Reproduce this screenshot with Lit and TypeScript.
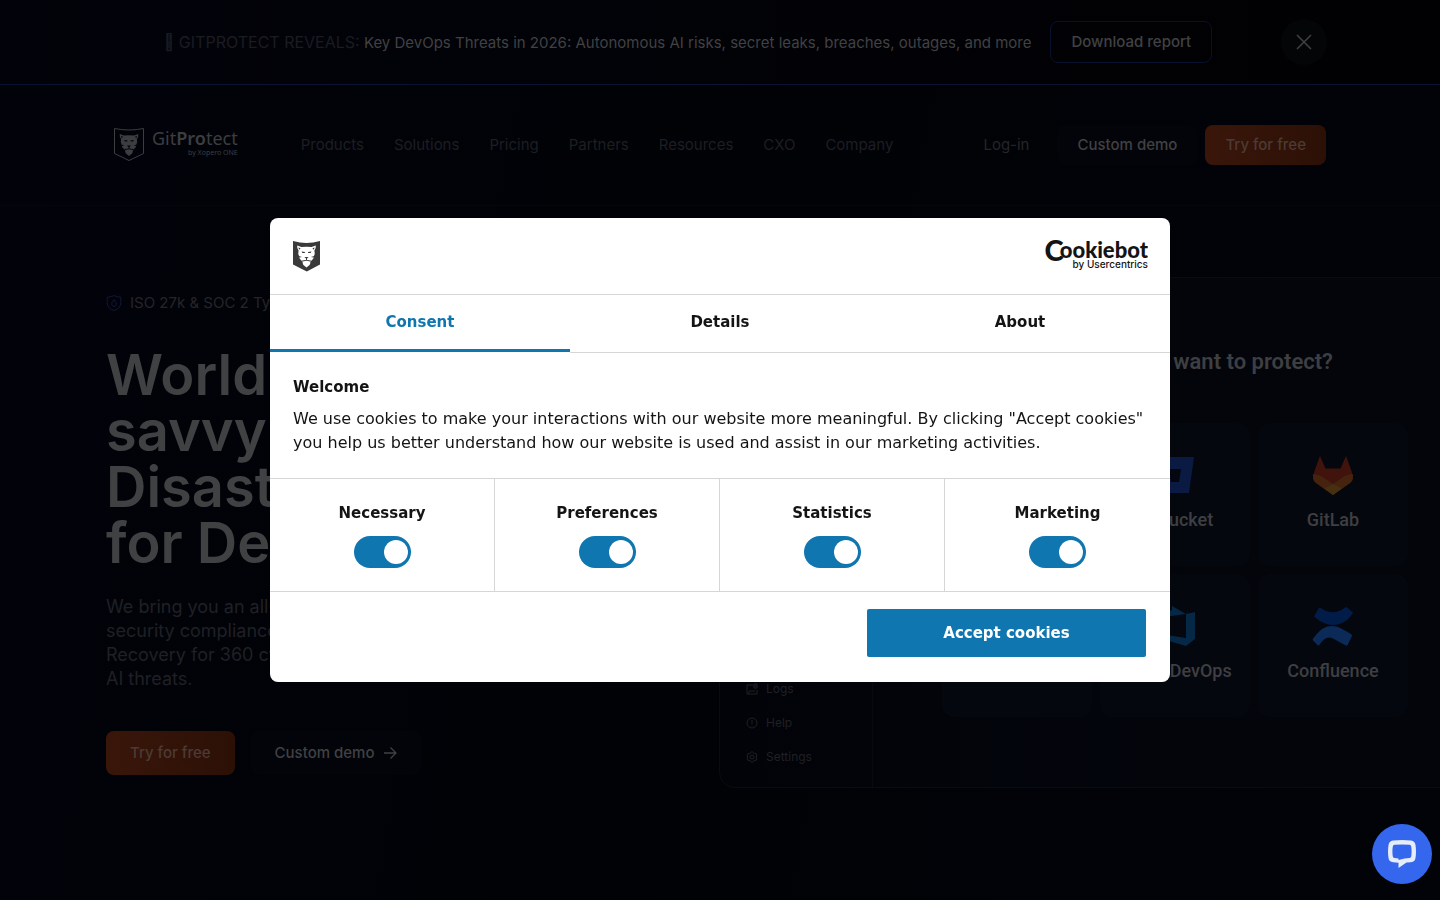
import { LitElement, html, css, svg } from "lit";
import { customElement, state } from "lit/decorators.js";
import { classMap } from "lit/directives/class-map.js";

const pantherFace = svg`
  <path d="M4.200 4.400 8.400 6Q10.500 5.800 13.500 5.800T18.600 6L22.800 4.400Q23.200 7.500 21.400 9.400Q22.300 12.500 20.800 15.200L20.400 17.600 18.600 19.400 17.400 20.600Q17.600 22.600 16.600 24L13.500 26.400 10.400 24Q9.400 22.600 9.600 20.600L8.400 19.400 6.600 17.600 6.200 15.200Q4.700 12.500 5.600 9.400Q3.800 7.500 4.200 4.400Z" />
`;
const pantherMarks = svg`
  <path d="M5.400 6.600 7.600 7.200 6.200 8.800ZM21.600 6.600 19.400 7.200 20.800 8.800ZM8.600 10.600 12 11 11.800 12 9.400 11.900ZM18.400 10.600 15 11 15.200 12 17.600 11.900ZM5.600 15 9 16 6.400 16.400ZM21.400 15 18 16 20.600 16.400ZM11.400 16H15.600L14 17.600V19L18 19.600 17.400 20.400 13.500 19.800 9.600 20.400 9 19.600 13 19V17.600Z" />
`;

@customElement("brand-mark")
export class BrandMark extends LitElement {
  static properties = { solid: { type: Boolean } };
  declare solid: boolean;

  static styles = css`
    :host { display: block; }
    svg { display: block; }
    .shield { fill: #3a3a3a; }
    .face { fill: #ffffff; }
    .marks { fill: #3a3a3a; }
    .shield-line { fill: none; stroke: #3c3d40; stroke-width: 1; }
    .face-dim { fill: #3c3d40; }
    .marks-dim { fill: #02030a; }
  `;

  render() {
    return this.solid
      ? html`<svg width="28" height="31" viewBox="0 0 28 31" aria-hidden="true">
          <path class="shield" d="M0 0Q7 2 13.500 2T27 0V23.500L13.800 30.500 0 23.500Z" />
          <g class="face">${pantherFace}</g><g class="marks">${pantherMarks}</g>
        </svg>`
      : html`<svg width="30" height="34" viewBox="-1 -1 30 34" aria-hidden="true">
          <path class="shield-line" d="M-.5-.5Q7 1 14 1T28.500-.5V24.500L14 31.500-.5 24.500Z" />
          <g class="face-dim" transform="translate(.5 .5)">${pantherFace}</g>
          <g class="marks-dim" transform="translate(.5 .5)">${pantherMarks}</g>
        </svg>`;
  }
}

@customElement("cookie-dialog")
export class CookieDialog extends LitElement {
  @state() private tab = "Consent";

  static styles = css`
    :host {
      position: fixed;
      top: 50%;
      left: 50%;
      transform: translate(-50%, -50%);
      width: min(900px, 94vw);
      background: #ffffff;
      color: #141414;
      border-radius: 8px;
      overflow: hidden;
      font-family: "DejaVu Sans", sans-serif;
      font-size: 15px;
      line-height: 24px;
    }
    .head {
      display: flex;
      align-items: center;
      justify-content: space-between;
      height: 76px;
      padding: 0 22px 0 23px;
      border-bottom: 1px solid #d6d6d6;
    }
    .tabs { display: grid; grid-template-columns: repeat(3, 1fr); }
    .tab {
      height: 58px;
      padding: 0 0 4px;
      border: 0;
      border-bottom: 1px solid #d6d6d6;
      background: none;
      color: inherit;
      font: bold 15px "DejaVu Sans", sans-serif;
    }
    .tab.active {
      height: 57px;
      padding-bottom: 1px;
      border-bottom: 3px solid #1076b0;
      color: #1076b0;
    }
    .body { padding: 22px 23px 23px; }
    .title { margin: 0 0 8px; font-size: 15px; font-weight: bold; }
    .text { margin: 0; font-size: 16px; }
    .kinds {
      display: grid;
      grid-template-columns: repeat(4, 1fr);
      border-top: 1px solid #d6d6d6;
      border-bottom: 1px solid #d6d6d6;
    }
    .kind {
      display: flex;
      flex-direction: column;
      align-items: center;
      gap: 11px;
      padding: 22px 0 23px;
      font-weight: bold;
      border-right: 1px solid #d6d6d6;
    }
    .kind:last-child { border-right: 0; }
    .switch {
      appearance: none;
      display: flex;
      justify-content: flex-end;
      align-items: center;
      box-sizing: border-box;
      width: 57px;
      height: 32px;
      margin: 0;
      padding: 0 3px;
      border-radius: 16px;
      background: #1076b0;
    }
    .switch::before {
      content: "";
      width: 24px;
      height: 24px;
      border-radius: 50%;
      background: #ffffff;
    }
    .switch:not(:checked) { justify-content: flex-start; background: #d6d6d6; }
    .foot { display: flex; justify-content: flex-end; padding: 17px 24px 25px; }
    .accept {
      width: 279px;
      height: 48px;
      border: 0;
      border-radius: 2px;
      background: #1076b0;
      color: #ffffff;
      font: bold 15px "DejaVu Sans", sans-serif;
    }
    .cookiebot { display: block; }
    .name { font: 900 22px Lato, sans-serif; }
    .big { font-size: 29px; }
    .by { font: 500 10px Inter, sans-serif; }
  `;

  render() {
    return html`
      <div class="head">
        <brand-mark solid></brand-mark>
        <svg class="cookiebot" width="112" height="48" viewBox="0 0 112 48" role="img" aria-label="Cookiebot by Usercentrics">
          <text class="name" x="112" y="26" text-anchor="end" fill="#141414"><tspan class="big" dy="3">C</tspan><tspan dx="-4" dy="-3">ookiebot</tspan></text>
          <text class="by" x="112" y="36" text-anchor="end" fill="#141414">by Usercentrics</text>
        </svg>
      </div>
      <div class="tabs" role="tablist">
        ${["Consent", "Details", "About"].map(
          (t) => html`<button class=${classMap({ tab: true, active: t === this.tab })} role="tab"
            aria-selected=${t === this.tab} @click=${() => (this.tab = t)}>${t}</button>`
        )}
      </div>
      <div class="body">
        <h2 class="title">Welcome</h2>
        <p class="text">
          We use cookies to make your interactions with our website more meaningful. By clicking "Accept cookies"
          you help us better understand how our website is used and assist in our marketing activities.
        </p>
      </div>
      <div class="kinds">
        ${["Necessary", "Preferences", "Statistics", "Marketing"].map(
          (k) => html`<label class="kind">${k}<input class="switch" type="checkbox" checked /></label>`
        )}
      </div>
      <div class="foot"><button class="accept">Accept cookies</button></div>
    `;
  }
}

@customElement("app-preview")
export class AppPreview extends LitElement {
  static styles = css`
    :host {
      display: grid;
      grid-template-columns: 153px 1fr;
      box-sizing: border-box;
      height: 511px;
      border: 1px solid #090b11;
      border-radius: 16px;
      background: linear-gradient(90deg, #020308, #03050c 50%, #04050a);
      font-family: Roboto, sans-serif;
      color: #3e3f42;
    }
    .side {
      display: flex;
      flex-direction: column;
      justify-content: flex-end;
      gap: 18px;
      padding: 0 26px 22px;
      border-right: 1px solid #080a0f;
      font: 12px/16px Inter, sans-serif;
      color: #1f2025;
    }
    .item { display: flex; align-items: center; gap: 8px; }
    .item svg { width: 12px; height: 12px; fill: none; stroke: currentColor; }
    .main { display: flex; flex-direction: column; align-items: center; gap: 48px; padding-top: 71px; }
    .ask { margin: 0; font-size: 22px; line-height: 26px; font-weight: 600; }
    .cards { display: grid; grid-template-columns: repeat(3, 150px); gap: 8px; }
    .card {
      display: flex;
      flex-direction: column;
      align-items: center;
      gap: 12px;
      box-sizing: border-box;
      height: 143px;
      padding-top: 31px;
      border-radius: 12px;
      background: #05070e;
      font-size: 18px;
      line-height: 24px;
      font-weight: 500;
      white-space: nowrap;
    }
    .card svg { width: 42px; height: 42px; }
  `;

  private icons = {
    logs: svg`<path d="M1 2H7M1 2V11H11V7M3 11V8H9M8 1H11V5H8ZM8 3H11" />`,
    help: svg`<circle cx="6" cy="6" r="5" /><path d="M6 3V7M6 8.200V9" />`,
    settings: svg`<circle cx="6" cy="6" r="2" /><path d="M6 .5 8 2.300 10.800 3.200 10.300 6 10.800 8.800 8 9.700 6 11.500 4 9.700 1.200 8.800 1.700 6 1.200 3.200 4 2.300Z" />`,
  };

  private logos = {
    github: svg`<circle cx="21" cy="21" r="19" fill="#3e3f42" />`,
    bitbucket: svg`<path fill="#0a1a42" d="M1 3H40L35 39H7ZM15 15 17 28H25L27 15Z" fill-rule="evenodd" />`,
    gitlab: svg`
      <path fill="#40140c" d="M8 2 2.500 17 .8 24Q1 27 4 29L21 41 38 29Q41 27 41 24L39.500 17 34 2 28.500 14.500H13.500Z" />
      <path fill="#45230e" d="M1.200 20Q0 25 4 29L21 41 38 29Q42 25 40.800 20Q34 20.500 29 24.500L21 30 13 24.500Q8 20.500 1.200 20Z" />
      <path fill="#46300f" d="M12 34.500 21 30 30 34.500 21 41Z" />`,
    azure: svg`<path fill="#042846" d="M3 15 7 10 18 5V1L32 9 10 12V29L3 27ZM32 9 41 7V34L32 41 15 36V40L6 29 32 33Z" />`,
    confluence: svg`
      <path fill="#021c4a" d="M8 2.500Q21 12 33 2.500Q34 2 35 2.500L41 7.500Q37 15 30 18Q21 22 12 18Q7 16 2.500 12Q2 11.500 2.500 10.500L7 3Q7.500 2.300 8 2.500Z" />
      <path fill="#0b2a58" d="M7 40.500Q14 29 22 34Q27 37 34 40.500Q35 41 35.500 40L40 31Q40 30 39.500 29.500Q31 24 26 22Q17 19 10 24Q5 28 .8 34Q.5 35 1 35.500L6 40.500Z" />`,
  };

  render() {
    const { github, bitbucket, gitlab, azure, confluence } = this.logos;
    const cards = [
      [github, "GitHub"], [bitbucket, "Bitbucket"], [gitlab, "GitLab"],
      [github, "Jira"], [azure, "Azure DevOps"], [confluence, "Confluence"],
    ];
    const items = [[this.icons.logs, "Logs"], [this.icons.help, "Help"], [this.icons.settings, "Settings"]];
    return html`
      <div class="side">
        ${items.map(([i, t]) => html`<div class="item"><svg viewBox="0 0 12 12">${i}</svg>${t}</div>`)}
      </div>
      <div class="main">
        <p class="ask">What all do you want to protect?</p>
        <div class="cards">
          ${cards.map(([i, t]) => html`<div class="card"><svg viewBox="0 0 42 42">${i}</svg>${t}</div>`)}
        </div>
      </div>
    `;
  }
}

@customElement("app-root")
export class AppRoot extends LitElement {
  static styles = css`
    :host {
      display: block;
      min-height: 100vh;
      overflow: hidden;
      background: linear-gradient(100deg, #02030a, #010206 45%, #020308);
      color: #404143;
      font-family: Inter, sans-serif;
      font-size: 15px;
      line-height: 18px;
    }
    a { color: inherit; text-decoration: none; }
    .banner {
      display: flex;
      align-items: center;
      gap: 11px;
      height: 84px;
      padding: 0 113px 0 106px;
      border-bottom: 1px solid #0a1430;
      background: linear-gradient(90deg, #02030a, #010103);
    }
    .news { flex: 1; display: flex; align-items: center; justify-content: center; gap: 19px; }
    .reveal { color: #1b1c21; font-size: 16px; }
    .report {
      padding: 0 20px;
      line-height: 40px;
      border: 1px solid #06112c;
      border-radius: 8px;
      font-weight: 500;
    }
    .close {
      display: grid;
      place-items: center;
      width: 46px;
      height: 46px;
      padding: 0;
      border: 0;
      border-radius: 50%;
      background: #040507;
      color: #404143;
    }
    .nav {
      display: flex;
      align-items: center;
      height: 120px;
      padding: 0 114px;
      border-bottom: 1px solid #04060b;
    }
    .logo { display: flex; align-items: center; gap: 8px; color: #3c3d40; }
    .word {
      display: flex;
      flex-direction: column;
      align-items: flex-end;
      padding-bottom: 6px;
      font: 18px/22px "Noto Sans", sans-serif;
    }
    .word b { font-weight: 600; }
    .word small { font-size: 7px; line-height: 8px; }
    .links { flex: 1; display: flex; gap: 30px; margin-left: 63px; color: #1d1e23; }
    .actions { display: flex; align-items: center; gap: 8px; }
    .login { margin-right: 20px; color: #242529; }
    .button {
      display: inline-flex;
      align-items: center;
      gap: 8px;
      height: 40px;
      padding: 0 20px;
      border-radius: 8px;
      background: #030409;
      font-weight: 500;
    }
    .button.hot { background: linear-gradient(90deg, #3a160a, #2c1006); color: #4b3b35; }
    .hero { display: grid; grid-template-columns: 1fr 721px; padding: 71px 0 112px 106px; }
    .pitch { padding-top: 16px; }
    .badge { display: flex; align-items: center; gap: 8px; line-height: 20px; color: #242529; }
    .headline { margin: 34px 0 24px; font-size: 56px; line-height: 56px; font-weight: 600; }
    .lead { margin: 0 0 40px; font-size: 18px; line-height: 24px; color: #1f2025; }
    .cta { display: flex; gap: 16px; }
    .cta .button { height: 44px; padding: 0 24px; }
    .preview { margin-right: -38px; }
    .chat {
      position: fixed;
      right: 8px;
      bottom: 16px;
      display: grid;
      place-items: center;
      width: 60px;
      height: 60px;
      padding: 0;
      border: 0;
      border-radius: 50%;
      background: #3467ee;
    }
  `;

  render() {
    return html`
      <div class="banner">
        <div class="news">
          <span><span class="reveal">&#x10FF00; GITPROTECT REVEALS:</span> Key DevOps Threats in 2026: Autonomous AI risks, secret leaks, breaches, outages, and more</span>
          <a class="report" href="#report">Download report</a>
        </div>
        <button class="close" aria-label="Close">
          <svg width="16" height="16" viewBox="0 0 16 16" fill="none" stroke="currentColor" stroke-width="1.500"><path d="M1 1 15 15M15 1 1 15" /></svg>
        </button>
      </div>
      <nav class="nav">
        <a class="logo" href="#home">
          <brand-mark></brand-mark>
          <span class="word"><span>Git<b>Pro</b>tect</span><small>by Xopero ONE</small></span>
        </a>
        <div class="links">
          ${["Products", "Solutions", "Pricing", "Partners", "Resources", "CXO", "Company"].map(
            (l) => html`<a href="#${l.toLowerCase()}">${l}</a>`
          )}
        </div>
        <div class="actions">
          <a class="login" href="#login">Log-in</a>
          <a class="button" href="#demo">Custom demo</a>
          <a class="button hot" href="#try">Try for free</a>
        </div>
      </nav>
      <main class="hero">
        <div class="pitch">
          <div class="badge">
            <svg width="16" height="16" viewBox="0 0 16 16" fill="none" stroke="#12163a">
              <path d="M8 .6Q11 2 14.800 2.200V8Q14.500 13.500 8 15.500Q1.500 13.500 1.200 8V2.200Q5 2 8 .6Z" />
              <path d="M8 4.500Q11 8 10.200 9.800Q9.500 11.500 8 11.500T5.800 9.800Q5 8 8 4.500Z" />
            </svg>
            ISO 27k &amp; SOC 2 Type II
          </div>
          <h1 class="headline">World's tech-<br />savvy Backup &amp;<br />Disaster Recovery<br />for DevOps</h1>
          <p class="lead">
            We bring you an all-in-one backup,<br />security compliance, and Disaster<br />Recovery for 360 cyber resilience in<br />AI threats.
          </p>
          <div class="cta">
            <a class="button hot" href="#try">Try for free</a>
            <a class="button" href="#demo">Custom demo
              <svg width="14" height="14" viewBox="0 0 14 14" fill="none" stroke="currentColor" stroke-width="1.300"><path d="M1 7H13M7.500 1.500 13 7 7.500 12.500" /></svg>
            </a>
          </div>
        </div>
        <app-preview class="preview"></app-preview>
      </main>
      <button class="chat" aria-label="Open chat">
        <svg width="28" height="28" viewBox="0 0 28 28" fill="#e6ecfa">
          <path fill-rule="evenodd" d="M5 .6Q14-.6 23 .6Q27 1.200 27.500 5Q28.500 11.500 27.500 18Q27 21.800 23 22.200L18.500 22.600 10.500 28V22.800L5 22.200Q1 21.800.5 18Q-.5 11.500.5 5Q1 1.200 5 .6ZM6.500 4.800Q5 5 4.800 6.500Q4 11.500 4.800 16.500Q5 17.800 6.500 18L10.500 18.400V20L16.500 18.600 21.500 18Q23 17.800 23.200 16.500Q24 11.500 23.200 6.500Q23 5 21.500 4.800Q14 4 6.500 4.800Z" />
        </svg>
      </button>
      <cookie-dialog></cookie-dialog>
    `;
  }
}
